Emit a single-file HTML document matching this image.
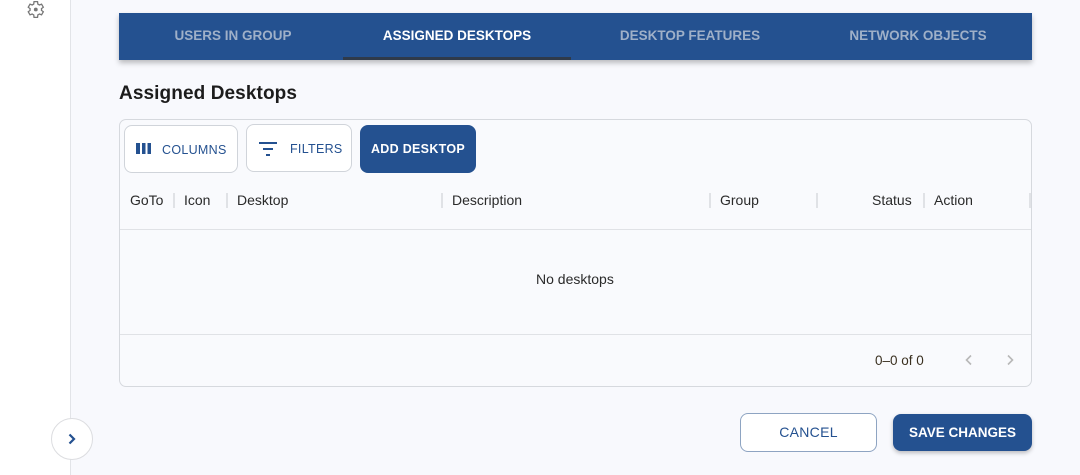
<!DOCTYPE html>
<html><head><meta charset="utf-8"><style>
*{box-sizing:border-box;margin:0;padding:0}
body{width:1080px;height:475px;overflow:hidden;background:#f8f9fd;font-family:"Liberation Sans",sans-serif;position:relative;color:#222}
.abs{position:absolute}
.side{left:0;top:0;width:71px;height:475px;background:#fff;border-right:1px solid #e2e4e8}
.tabs{left:119px;top:13px;width:913px;height:47px;background:#245190;box-shadow:0 3px 5px rgba(0,0,0,.25)}
.tab{position:absolute;top:0;height:47px;line-height:46px;text-align:center;font-size:13.5px;font-weight:bold;color:#9fb0c8;width:228px}
.tab.act{color:#fff;border-bottom:3px solid #2f3a4a;line-height:46px}
h2{position:absolute;left:119px;top:83px;font-size:19px;font-weight:bold;color:#1c1c1c;letter-spacing:.1px}
.card{left:119px;top:119px;width:913px;height:268px;border:1px solid #d6d9de;border-radius:7px;background:#f9fafd}
.btn{position:absolute;border-radius:8px;font-size:12.5px;height:48px;line-height:48px;letter-spacing:.3px}
.ob{border:1px solid #d0d4da;background:#fff;color:#245190}
.hd{position:absolute;top:192px;font-size:14px;color:#2a2a2a}
.sep{position:absolute;top:193px;width:2px;height:15px;background:#e0e2e6}
</style></head><body>
<div class="abs side"></div>
<svg class="abs" style="left:24px;top:-1px" width="22" height="21" viewBox="0 0 24 24"><path d="M19.4 13a7.5 7.5 0 000-2l2.1-1.6-2-3.5-2.5 1a7 7 0 00-1.7-1L14.9 3h-4l-.4 2.9a7 7 0 00-1.7 1l-2.5-1-2 3.5L6.4 11a7.5 7.5 0 000 2l-2.1 1.6 2 3.5 2.5-1a7 7 0 001.7 1l.4 2.9h4l.4-2.9a7 7 0 001.7-1l2.5 1 2-3.5z" fill="none" stroke="#777" stroke-width="1.5"/><circle cx="12.9" cy="12" r="2.2" fill="#777"/></svg>
<div class="abs" style="left:51px;top:418px;width:42px;height:42px;border-radius:50%;border:1px solid #dcdde0;background:#fff"></div>
<svg class="abs" style="left:65px;top:432px" width="14" height="14" viewBox="0 0 14 14"><path d="M4.5 2.5l4.5 4.5-4.5 4.5" fill="none" stroke="#245190" stroke-width="2.2"/></svg>

<div class="abs tabs">
<div class="tab" style="left:0">USERS IN GROUP</div>
<div class="tab act" style="left:224px">ASSIGNED DESKTOPS</div>
<div class="tab" style="left:457px">DESKTOP FEATURES</div>
<div class="tab" style="left:685px">NETWORK OBJECTS</div>
</div>
<h2>Assigned Desktops</h2>
<div class="abs card"></div>
<div class="btn ob" style="left:124px;top:125px;width:114px;padding-left:37px">COLUMNS</div>
<svg class="abs" style="left:136px;top:143px" width="16" height="12"><rect x="0" y="0" width="4" height="11" fill="#245190"/><rect x="6" y="0" width="3.5" height="11" fill="#245190"/><rect x="11.5" y="0" width="3.5" height="11" fill="#245190"/></svg>
<div class="btn ob" style="left:246px;top:124px;width:106px;padding-left:43px">FILTERS</div>
<svg class="abs" style="left:259px;top:141px" width="20" height="16"><rect x="0" y="1" width="18" height="2" fill="#245190"/><rect x="4" y="7" width="10" height="2" fill="#245190"/><rect x="7" y="13" width="4" height="2" fill="#245190"/></svg>
<div class="btn" style="left:360px;top:125px;width:116px;background:#245190;color:#fff;font-weight:bold;text-align:center">ADD DESKTOP</div>

<div class="hd" style="left:130px">GoTo</div><div class="sep" style="left:173px"></div>
<div class="hd" style="left:184px">Icon</div><div class="sep" style="left:226px"></div>
<div class="hd" style="left:237px">Desktop</div><div class="sep" style="left:441px"></div>
<div class="hd" style="left:452px">Description</div><div class="sep" style="left:709px"></div>
<div class="hd" style="left:720px">Group</div><div class="sep" style="left:816px"></div>
<div class="hd" style="left:872px">Status</div><div class="sep" style="left:923px"></div>
<div class="hd" style="left:934px">Action</div><div class="sep" style="left:1029px"></div>
<div class="abs" style="left:120px;top:229px;width:911px;height:1px;background:#e0e2e6"></div>
<div class="abs" style="left:536px;top:271px;font-size:14px;color:#2a2a2a">No desktops</div>
<div class="abs" style="left:120px;top:334px;width:911px;height:1px;background:#e0e2e6"></div>
<div class="abs" style="left:875px;top:353px;font-size:13.5px;color:#3a3020">0–0 of 0</div>
<svg class="abs" style="left:962px;top:353px" width="14" height="14"><path d="M9 2.5L4.5 7 9 11.5" fill="none" stroke="#b8b8b8" stroke-width="1.6"/></svg>
<svg class="abs" style="left:1003px;top:353px" width="14" height="14"><path d="M5 2.5L9.5 7 5 11.5" fill="none" stroke="#b8b8b8" stroke-width="1.6"/></svg>

<div class="btn" style="left:740px;top:413px;width:137px;height:39px;line-height:37px;border:1px solid #8ea4c2;background:#fff;color:#245190;text-align:center;font-size:14px">CANCEL</div>
<div class="btn" style="left:893px;top:414px;width:139px;height:37px;line-height:37px;background:#245190;color:#fff;font-weight:bold;text-align:center;font-size:13.5px;letter-spacing:0;box-shadow:0 2px 4px rgba(0,0,0,.25)">SAVE CHANGES</div>
</body></html>
